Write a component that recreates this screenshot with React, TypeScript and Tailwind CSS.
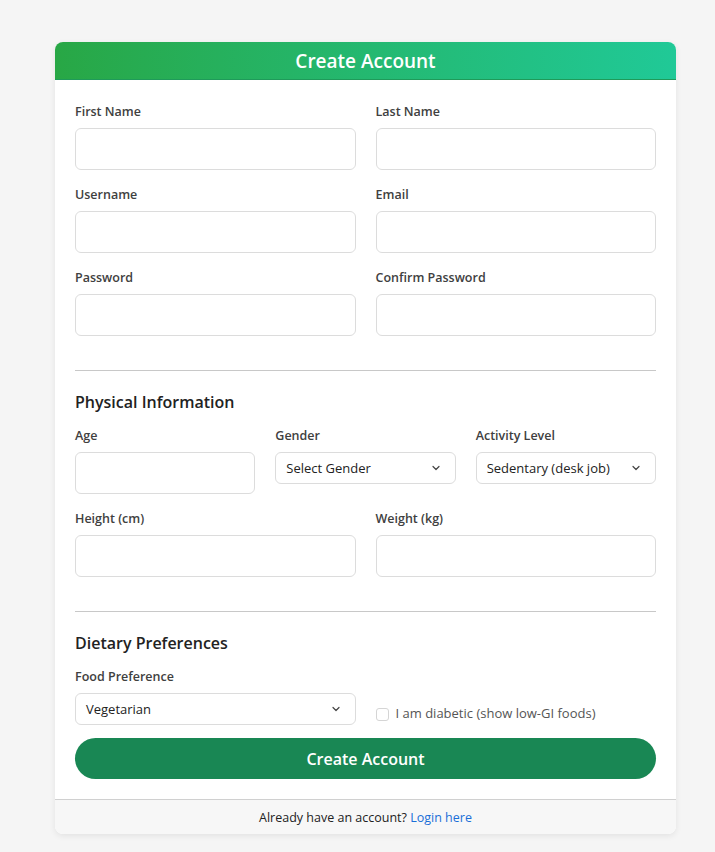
import React from 'react';

const font = { fontFamily: '"Open Sans", "Noto Sans", sans-serif' };

const Label = ({ children }: { children: React.ReactNode }) => (
  <label className="text-[12.5px] font-semibold text-[#404040] leading-[18px] pt-[1px] mb-[7px]">{children}</label>
);

const Field = ({ label }: { label: string }) => (
  <div className="flex flex-col">
    <Label>{label}</Label>
    <input className="h-[42px] w-full rounded-[6px] border border-[#dcdcdc] bg-white px-3 text-[13px] outline-none" />
  </div>
);

const Chevron = () => (
  <svg width="12" height="12" viewBox="0 0 16 16" fill="none" stroke="#444" strokeWidth="1.6" strokeLinecap="round" strokeLinejoin="round">
    <path d="M4 6l4 4 4-4" />
  </svg>
);

const SelectBox = ({ value }: { value: string }) => (
  <div className="flex h-[32px] w-full items-center justify-between rounded-[6px] border border-[#dcdcdc] bg-white pl-[10px] pr-[13px] text-[13px] text-[#222]">
    <span className="pt-[2px]">{value}</span>
    <Chevron />
  </div>
);

const SelectField = ({ label, value }: { label: string; value: string }) => (
  <div className="flex flex-col">
    <Label>{label}</Label>
    <SelectBox value={value} />
  </div>
);

const SectionTitle = ({ children }: { children: React.ReactNode }) => (
  <h5 className="text-[16px] font-semibold text-[#222] leading-[22px] mb-[13px]">{children}</h5>
);

export default function App() {
  return (
    <div className="min-h-[852px] w-full bg-[#f5f5f5] pt-[42px]" style={font}>
      <div className="mx-[55px] w-[621px] overflow-hidden rounded-[8px] bg-white shadow-[0_2px_6px_rgba(0,0,0,0.08)]">
        <div className="flex h-[38px] items-center justify-center border-b border-[#1f9a5a] bg-gradient-to-r from-[#28a745] to-[#20c997]">
          <h3 className="text-[19px] font-semibold text-white pt-[1px]">Create Account</h3>
        </div>

        <div className="px-[20px] pt-[22px] pb-[20px]">
          <div className="grid grid-cols-2 gap-x-[20px] gap-y-[15px]">
            <Field label="First Name" />
            <Field label="Last Name" />
            <Field label="Username" />
            <Field label="Email" />
            <Field label="Password" />
            <Field label="Confirm Password" />
          </div>

          <hr className="mt-[34px] mb-[20px] border-t border-[#c8c8c8]" />

          <SectionTitle>Physical Information</SectionTitle>
          <div className="grid grid-cols-3 gap-x-[20px] items-start">
            <Field label="Age" />
            <SelectField label="Gender" value="Select Gender" />
            <SelectField label="Activity Level" value="Sedentary (desk job)" />
          </div>
          <div className="mt-[15px] grid grid-cols-2 gap-x-[20px]">
            <Field label="Height (cm)" />
            <Field label="Weight (kg)" />
          </div>

          <hr className="mt-[34px] mb-[20px] border-t border-[#c8c8c8]" />

          <SectionTitle>Dietary Preferences</SectionTitle>
          <div className="grid grid-cols-2 gap-x-[20px] items-end">
            <SelectField label="Food Preference" value="Vegetarian" />
            <div className="flex items-center gap-[7px] h-[32px] pt-[10px]">
              <span className="h-[13px] w-[13px] rounded-[3px] border border-[#d5d5d5] bg-white" />
              <span className="text-[13px] text-[#555]">I am diabetic (show low-GI foods)</span>
            </div>
          </div>

          <button className="mt-[13px] flex h-[41px] w-full items-center justify-center rounded-full bg-[#198754] text-[16px] font-semibold text-white">
            Create Account
          </button>
        </div>

        <div className="flex h-[35px] items-center justify-center border-t border-[#d0d0d0] bg-[#f7f7f7] pt-[2px] text-[12.5px] text-[#222]">
          <span>
            Already have an account? <a className="text-[#1a6fd8]">Login here</a>
          </span>
        </div>
      </div>
    </div>
  );
}
